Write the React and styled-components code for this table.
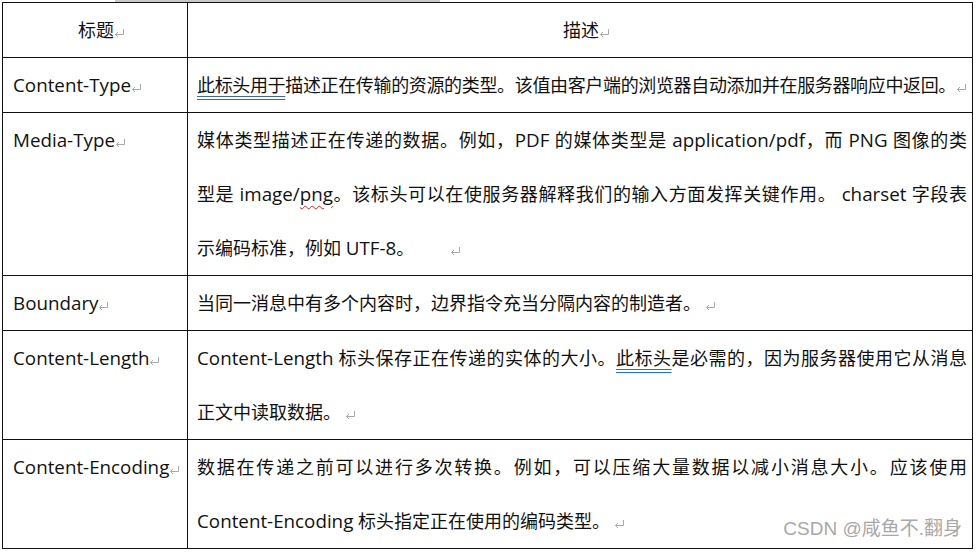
import styled, { createGlobalStyle } from "styled-components";

const GlobalStyle = createGlobalStyle`
  html, body {
    margin: 0;
    padding: 0;
    background: #ffffff;
  }
  body {
    font-family: "Open Sans", "Noto Sans CJK SC", sans-serif;
    color: #111111;
  }
`;

// Word's paragraph mark, drawn instead of using a font glyph
const Mark = ({ gap }) => (
  <MarkIcon $gap={gap} width="11" height="10" viewBox="0 0 11 10">
    <path d="M9.5 1 V6.5 H1.5 M4 4 L1.5 6.5 L4 9" fill="none" stroke="#a8a8a8" strokeWidth="1" />
  </MarkIcon>
);

const App = () => {
  return (
    <Page>
      <GlobalStyle />
      <ScrollTrack>
        <ScrollThumb />
      </ScrollTrack>
      <Sheet>
        <Table>
          <colgroup>
            <col style={{ width: 185 }} />
            <col />
          </colgroup>
          <thead>
            <tr>
              <HeadCell>
                标题
                <Mark />
              </HeadCell>
              <HeadCell>
                描述
                <Mark />
              </HeadCell>
            </tr>
          </thead>
          <tbody>
            {rows.map((row) => (
              <tr key={row.name}>
                <NameCell>
                  {row.name}
                  <Mark />
                </NameCell>
                <DescCell>
                  {row.lines.map((line, i) => {
                    const last = i === row.lines.length - 1;
                    return (
                      <Line key={i} $justify={!last || row.fill} $tight={row.fill}>
                        {line}
                        {last && <Mark gap={row.markGap} />}
                      </Line>
                    );
                  })}
                </DescCell>
              </tr>
            ))}
          </tbody>
        </Table>
        <Watermark>CSDN @咸鱼不.翻身</Watermark>
      </Sheet>
    </Page>
  );
};

const Page = styled.div`
  width: 978px;
  height: 552px;
  overflow: hidden;
  background: #ffffff;
`;

const ScrollTrack = styled.div`
  height: 2px;
  display: flex;
`;

const ScrollThumb = styled.div`
  margin-left: 115px;
  width: 325px;
  background: #c8c8c8;
`;

const Sheet = styled.div`
  position: relative;
  margin-left: 2px;
  width: 971px;
`;

const Table = styled.table`
  width: 971px;
  table-layout: fixed;
  border-collapse: collapse;
  font-size: 18px;
  line-height: 54px;

  td,
  th {
    border: 1px solid #111111;
    vertical-align: top;
    white-space: nowrap;
  }
`;

const HeadCell = styled.th`
  font-weight: 400;
  text-align: center;
  padding: 0 0 0 13px;
  height: 54px;
`;

const NameCell = styled.td`
  padding: 0 0 0 10px;
  font-size: 18.8px;
`;

const DescCell = styled.td`
  padding: 0 5px 0 9px;
`;

const Line = styled.div`
  height: 54px;
  letter-spacing: ${(p) => (p.$tight ? "-0.35px" : "normal")};
  text-align: ${(p) => (p.$justify ? "justify" : "left")};
  text-align-last: ${(p) => (p.$justify ? "justify" : "left")};
`;

const MarkIcon = styled.svg`
  display: inline-block;
  vertical-align: -1px;
  margin-left: ${(p) => p.$gap || 0}px;
`;

const En = styled.span`
  font-size: 18.8px;
`;

const Grammar = styled.span`
  text-decoration: underline double ${(p) => (p.$bright ? "#1e6fe0" : "#3b62b8")};
  text-underline-offset: 4px;
`;

const Spelling = styled.span`
  text-decoration: underline wavy #e02020;
  text-decoration-thickness: 1px;
  text-underline-offset: 4px;
`;

const Watermark = styled.div`
  position: absolute;
  right: 11px;
  bottom: 10px;
  font-family: "Liberation Sans", "Noto Sans CJK SC", sans-serif;
  font-size: 19px;
  line-height: 20px;
  color: #a8a8a8;
  pointer-events: none;
`;

const rows = [
  {
    name: "Content-Type",
    fill: true,
    lines: [
      <>
        <Grammar>此标头用于</Grammar>描述正在传输的资源的类型。该值由客户端的浏览器自动添加并在服务器响应中返回。
      </>,
    ],
  },
  {
    name: "Media-Type",
    lines: [
      <>
        媒体类型描述正在传递的数据。例如，<En>PDF</En> 的媒体类型是 <En>application/pdf</En>，而 <En>PNG</En> 图像的类
      </>,
      <>
        型是 <En>image/</En>
        <Spelling>
          <En>png</En>
        </Spelling>
        。该标头可以在使服务器解释我们的输入方面发挥关键作用。 <En>charset</En> 字段表
      </>,
      <>
        示编码标准，例如 <En>UTF-8</En>。
      </>,
    ],
    markGap: 36,
  },
  {
    name: "Boundary",
    lines: [<>当同一消息中有多个内容时，边界指令充当分隔内容的制造者。</>],
    markGap: 4,
  },
  {
    name: "Content-Length",
    lines: [
      <>
        <En>Content-Length</En> 标头保存正在传递的实体的大小。<Grammar $bright>此标头</Grammar>是必需的，因为服务器使用它从消息
      </>,
      <>正文中读取数据。</>,
    ],
    markGap: 4,
  },
  {
    name: "Content-Encoding",
    lines: [
      <>数据在传递之前可以进行多次转换。例如，可以压缩大量数据以减小消息大小。应该使用</>,
      <>
        <En>Content-Encoding</En> 标头指定正在使用的编码类型。
      </>,
    ],
    markGap: 4,
  },
];

export default App;
